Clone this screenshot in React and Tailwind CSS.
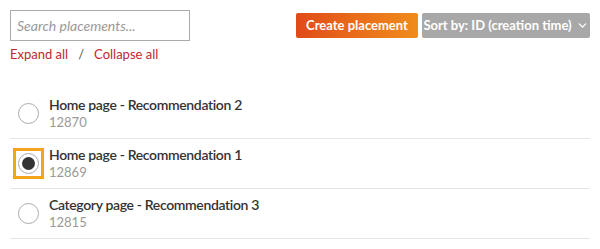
import React, { useState } from 'react';
import { ChevronDown } from 'lucide-react';

const placements = [
  { id: 12870, name: 'Home page - Recommendation 2' },
  { id: 12869, name: 'Home page - Recommendation 1' },
  { id: 12815, name: 'Category page - Recommendation 3' },
];

export default function App() {
  const [selected, setSelected] = useState(12869);

  return (
    <div className="w-[600px] h-[249px] bg-white px-[10px] pt-[10px] font-['Lato',sans-serif] text-[#333]">
      <div className="flex items-start justify-between">
        <div>
          <input
            placeholder="Search placements..."
            className="w-[180px] h-[31px] border border-[#aaa] px-[6px] text-[14px] italic placeholder:text-[#999] outline-none"
          />
          <div className="mt-[4px] text-[13px] text-[#c4262e] flex items-center">
            <span>Expand all</span>
            <span className="mx-[10px] text-[#555]">/</span>
            <span>Collapse all</span>
          </div>
        </div>
        <div className="flex gap-[4px] mt-[3px]">
          <button className="h-[25px] w-[122px] rounded-[2px] bg-gradient-to-r from-[#e04a18] to-[#f08c1c] text-white text-[13px] font-bold">
            Create placement
          </button>
          <button className="h-[25px] w-[168px] rounded-[2px] bg-[#a8a8a8] text-white text-[13px] font-bold flex items-center justify-center gap-[4px]">
            Sort by: ID (creation time)
            <ChevronDown className="w-[13px] h-[13px]" strokeWidth={2.5} />
          </button>
        </div>
      </div>

      <div className="mt-[24px]">
        {placements.map((p) => (
          <div key={p.id} className="flex items-center h-[50px] border-b border-[#e5e5e5]">
            <div
              className={`w-[31px] h-[31px] ml-[3px] flex items-center justify-center border-[3px] ${
                selected === p.id ? 'border-[#f5a31a]' : 'border-transparent'
              }`}
              onClick={() => setSelected(p.id)}
            >
              <div className="w-[21px] h-[21px] rounded-full border border-[#aaa] flex items-center justify-center">
                {selected === p.id && <div className="w-[13px] h-[13px] rounded-full bg-[#333]" />}
              </div>
            </div>
            <div className="ml-[5px] leading-tight">
              <div className="text-[14px] font-semibold tracking-[-0.35px]">{p.name}</div>
              <div className="text-[13px] text-[#999]">{p.id}</div>
            </div>
          </div>
        ))}
      </div>
    </div>
  );
}
